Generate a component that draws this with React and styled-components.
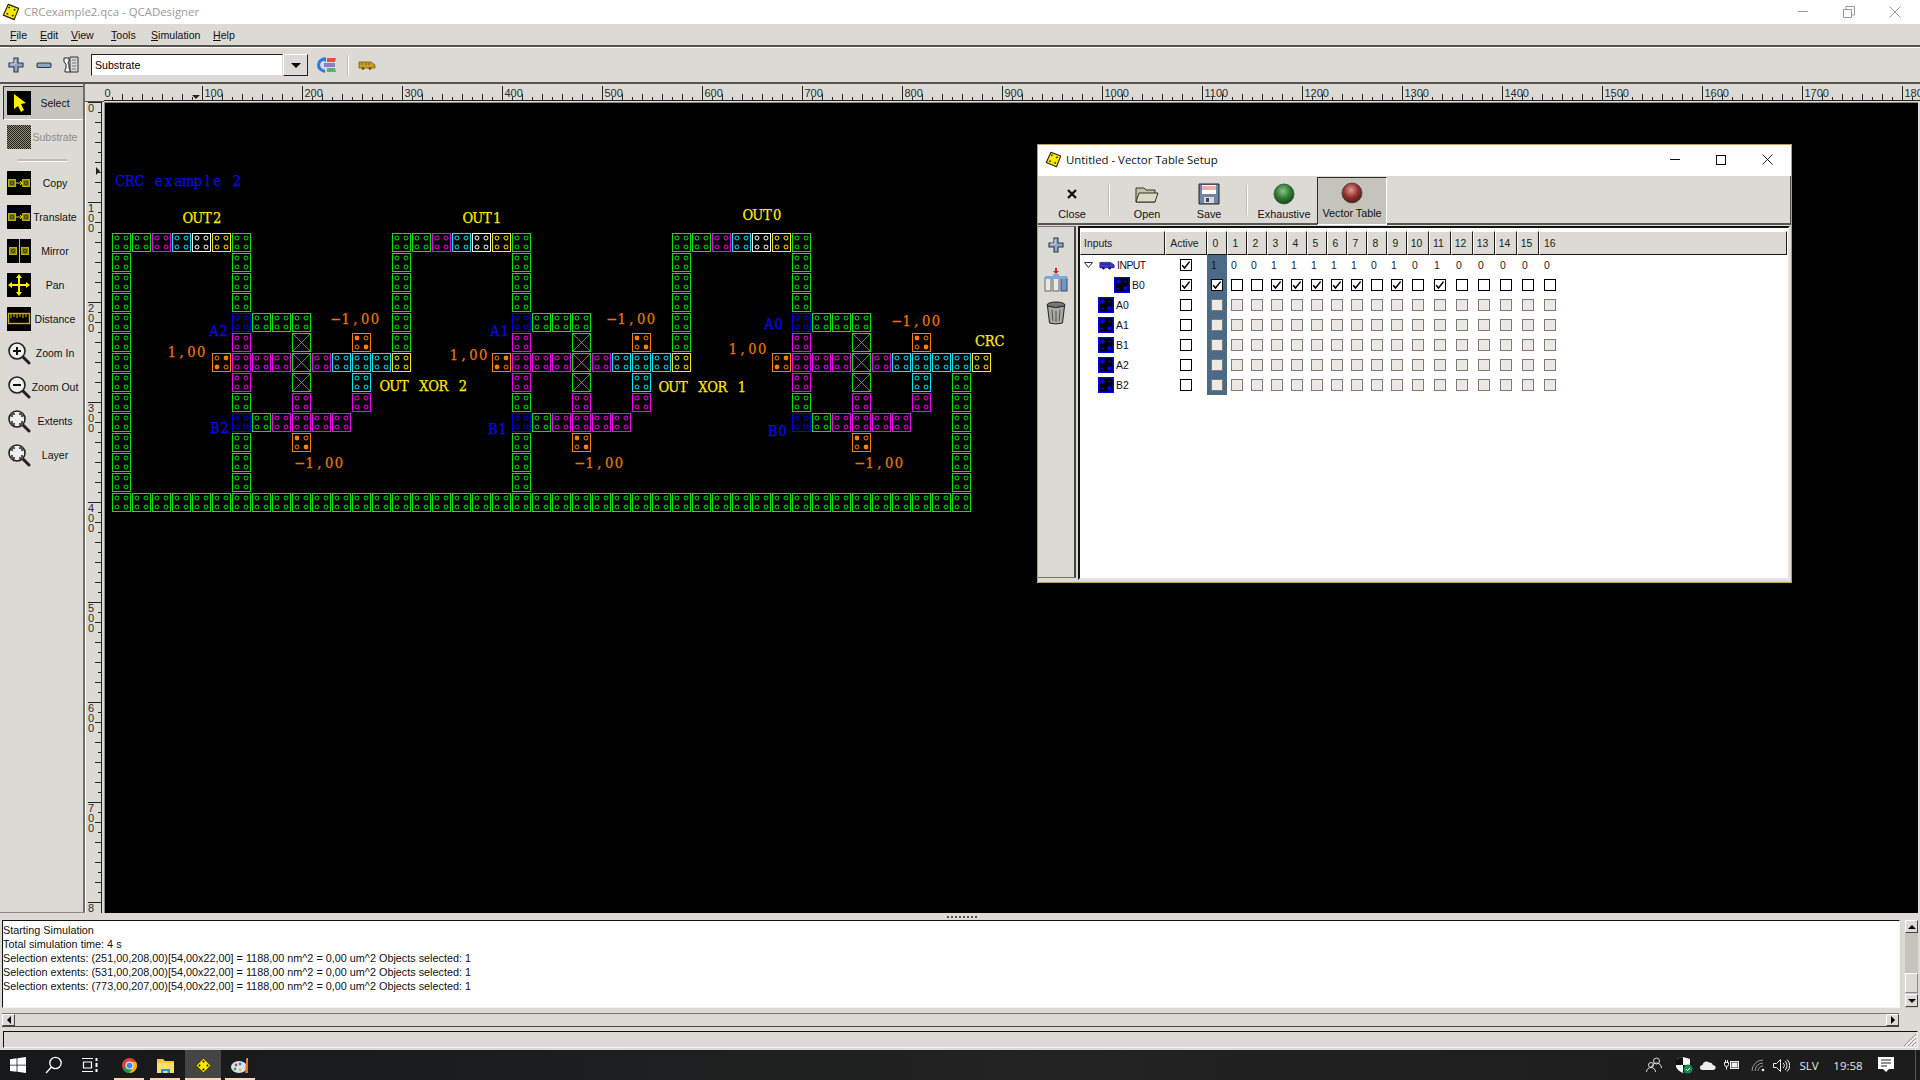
import React from 'react';
import styled, { createGlobalStyle } from 'styled-components';

const PANEL = '#dbdad5';
const SANS = '"Liberation Sans", Arial, sans-serif';
const UI = '"Open Sans", "Noto Sans", sans-serif';

const Global = createGlobalStyle`
  html, body { margin: 0; padding: 0; width: 1920px; height: 1080px; overflow: hidden; background: ${PANEL}; }
  #root { width: 1920px; height: 1080px; }
  * { box-sizing: border-box; }
`;

const Root = styled.div`
  position: relative; width: 1920px; height: 1080px; display: flex; flex-direction: column;
  background: ${PANEL}; font-family: ${SANS}; font-size: 10.5px; color: #000; overflow: hidden;
`;

/* ---------- main window chrome ---------- */
const TitleBar = styled.div`
  height: 24px; flex: none; background: #fff; display: flex; align-items: center; padding: 0 0 1px 2px;
`;
const TitleText = styled.span`
  margin-left: 4px; font: 11.4px ${UI}; color: #9a9a9a; flex: 1;
`;
const WinControls = styled.div`
  display: flex; align-items: center; padding-right: ${p => p.$pr ?? 2}px;
`;
const WinButton = styled.div`
  width: 46px; height: 24px; display: flex; align-items: center; justify-content: center;
`;
const MenuBar = styled.div`
  height: 23px; flex: none; display: flex; align-items: center; padding: 0 0 0 10px;
  border-bottom: 2px solid #55554f; gap: 0;
`;
const MenuItem = styled.span`
  width: ${p => p.$w}px; font-size: 10.6px; color: #111;
  u { text-decoration: underline; text-underline-offset: 1px; }
`;
const ToolBar = styled.div`
  height: 37px; flex: none; display: flex; align-items: center; border-top: 1px solid #fff;
  border-bottom: 2px solid #55554f;
`;
const ToolIcon = styled.div`
  width: ${p => p.$w}px; display: flex; justify-content: center; flex: none;
`;
const Combo = styled.div`
  display: flex; width: 217px; height: 22px; margin: 0 0 0 5px; flex: none;
`;
const ComboEntry = styled.div`
  flex: 1; background: #fff; border: 1px solid; border-color: #222 #dbdad5 #dbdad5 #222;
  font-size: 10.6px; padding: 3px 3px; line-height: 14px;
`;
const ComboArrow = styled.div`
  width: 25px; background: ${PANEL}; border: 1px solid; border-color: #fff #222 #222 #fff;
  display: flex; align-items: center; justify-content: center;
  &::after { content: ''; border-style: solid; border-width: 5px 5.5px 0; border-color: #000 transparent transparent; }
`;
const VSep = styled.div`
  width: 2px; height: 20px; flex: none; background: #bfbeb8; border-right: 1px solid #fff; margin: ${p => p.$m || '0 8px'};
`;

/* ---------- workspace ---------- */
const MainRow = styled.div`
  flex: none; height: 830px; display: flex;
`;
const SideBar = styled.div`
  width: 85px; flex: none; height: 829px; padding: 2px 0 0 3px; display: flex; flex-direction: column;
  border-right: 2px solid #6f6e68; border-bottom: 1px solid #8a8982;
`;
const SideBtn = styled.div`
  width: 80px; height: 34px; flex: none; display: flex; align-items: center; padding-left: 4px;
  ${p => p.$pressed && `background: #c6c5be; border: 1px solid; border-width: 1px 0 1px 1px; border-color: #333 #fff #fff #333; padding-left: 3px;`}
`;
const SideLabel = styled.span`
  flex: 1; text-align: center; font-size: 10.5px; white-space: nowrap;
  color: ${p => (p.$dim ? '#8e8d88' : '#111')}; margin-right: 4px;
`;
const SideSep = styled.div`
  height: 12px; flex: none; display: flex; align-items: center; padding-left: 15px;
  &::after { content: ''; width: 49px; height: 2px; background: #bdbcb6; border-bottom: 1px solid #fff; }
`;
const Work = styled.div`
  flex: 1; display: grid; grid-template-columns: 19px 1fr; grid-template-rows: 18px 1fr; height: 829px;
`;
const RulerCorner = styled.div`
  background: ${PANEL}; border-bottom: 1px solid #55554f;
`;
const RulerBox = styled.div`
  background: ${PANEL}; overflow: hidden; svg { display: block; }
`;
const Canvas = styled.div`
  background: #000; margin-right: 2px; border-left: 1px solid #888; border-top: 1px solid #888; overflow: hidden;
  svg { display: block; margin: -1px 0 0 -1px; }
`;
const Grip = styled.div`
  height: 6px; flex: none; display: flex; justify-content: center; align-items: center; gap: 2px; padding-left: 4px;
  i { width: 2px; height: 2px; background: #55554f; }
`;
const LogRow = styled.div`
  height: 88px; flex: none; display: flex; padding: 0 2px 0 2px;
`;
const LogBox = styled.div`
  width: 1898px; border: 1px solid; border-color: #111 #f4f4f2 #f4f4f2 #111; border-width: 1px; background: #fff;
  padding: 2px 0 0 0; font-size: 10.83px; line-height: 14px; color: #111; white-space: pre;
`;
const VScroll = styled.div`
  margin-left: 5px; width: 13px; display: flex; flex-direction: column; background: #c4c3bc;
`;
const ScrollBtn = styled.div`
  height: ${p => p.$h || 13}px; width: ${p => p.$w || 13}px; flex: none; background: ${PANEL};
  margin-top: ${p => p.$mt || 0}px;
  border: 1px solid; border-color: #fff #44443f #44443f #fff; display: flex; align-items: center; justify-content: center;
  &::after {
    content: ''; border-style: solid;
    ${p => p.$dir === 'up' && 'border-width: 0 4px 4px; border-color: transparent transparent #000;'}
    ${p => p.$dir === 'down' && 'border-width: 4px 4px 0; border-color: #000 transparent transparent;'}
    ${p => p.$dir === 'left' && 'border-width: 4px 4px 4px 0; border-color: transparent #000 transparent transparent;'}
    ${p => p.$dir === 'right' && 'border-width: 4px 0 4px 4px; border-color: transparent transparent transparent #000;'}
  }
`;
const ScrollThumb = styled.div`
  height: 20px; flex: none; background: ${PANEL}; border: 1px solid; border-color: #fff #8a8982 #8a8982 #fff;
  margin-top: ${p => p.$top}px;
`;
const HScroll = styled.div`
  height: 14px; flex: none; margin: 5px 21px 0 2px; display: flex; justify-content: space-between; align-items: stretch;
  background: ${PANEL}; border-top: 1px solid #777670; border-bottom: 1px solid #444;
`;
const StatusBar = styled.div`
  height: 17px; flex: none; margin: 4px 2px 0 3px; border: 1px solid; border-color: #111 #f4f4f2 #f4f4f2 #111; position: relative;
  svg { position: absolute; right: 0; bottom: 0; }
`;
const Taskbar = styled.div`
  height: 30px; flex: none; margin-top: 2px; background: linear-gradient(90deg, #16181a 0%, #222 55%, #1b1b1b 100%);
  display: flex; align-items: stretch; position: relative;
`;
const TaskSlot = styled.div`
  width: ${p => p.$w}px; margin-left: ${p => p.$ml || 0}px; flex: none; display: flex; align-items: center; justify-content: center;
  background: ${p => (p.$active ? '#454545' : 'transparent')};
  border-bottom: ${p => (p.$open ? '2px solid #f9d7b8' : '0')};
  padding-top: ${p => (p.$open ? 2 : 0)}px;
`;
const Tray = styled.div`
  margin-left: auto; display: flex; align-items: center; color: #e6e6e6; font: 11.5px ${UI};
`;
const TrayIcon = styled.div`
  width: ${p => p.$w}px; display: flex; justify-content: center; flex: none;
`;
const TrayText = styled.span`
  width: ${p => p.$w}px; text-align: center; flex: none;
`;
const TaskEnd = styled.div`
  width: 1px; height: 30px; background: #555; margin: 0 4px 0 14px;
`;

/* ---------- vector table window ---------- */
const Dialog = styled.div`
  position: absolute; left: 1037px; top: 144px; width: 755px; height: 439px; display: flex; flex-direction: column;
  background: ${PANEL}; border: 1px solid #c69a5e; border-bottom-width: 1px;
`;
const DlgTitle = styled.div`
  height: 31px; flex: none; background: #fff; display: flex; align-items: center; padding-left: 7px; padding-bottom: 2px;
`;
const DlgTitleText = styled.span`
  flex: 1; margin-left: 4px; font: 11.4px ${UI}; color: #111;
`;
const DlgTools = styled.div`
  height: 49px; flex: none; display: flex; align-items: stretch; border-bottom: 2px solid #55554f; border-right: 1px solid #55554f;
`;
const DlgTool = styled.div`
  width: ${p => p.$w}px; margin-left: ${p => p.$ml || 0}px; flex: none; display: flex; flex-direction: column; align-items: center;
  font-size: 10.8px; padding-top: 5px; height: 47px; margin-top: 2px; color: #111;
  ${p => p.$on && 'background:#c4c3bc; border:1px solid; border-color:#2a2a28 #fff #fff #2a2a28; padding-top: 4px; margin-top: 1px; height: 48px;'}
  svg { height: 22px; flex: none; }
  span { margin-top: 3px; line-height: 12px; white-space: nowrap; }
`;
const DlgSep = styled.div`
  width: 2px; height: 30px; background: #bdbcb6; border-right: 1px solid #fff; margin: 9px ${p => p.$r}px 0 ${p => p.$l}px; flex: none;
`;
const DlgBody = styled.div`
  flex: 1; display: flex; padding-top: 1px; min-height: 0;
`;
const DlgSide = styled.div`
  width: 38px; flex: none; display: flex; flex-direction: column; align-items: center; padding-top: 10px;
  border-right: 2px solid #44443f; border-bottom: 1px solid #777670; margin-bottom: 4px; border-top: 1px solid #777;
`;
const SideTool = styled.div`
  display: flex; justify-content: center; margin-top: ${p => p.$mt || 0}px;
  svg { display: block; }
`;
const TableFrame = styled.div`
  margin-left: 2px; flex: 1; display: flex; flex-direction: column; background: #fff; min-width: 0;
  border-left: 2px solid #111; border-top: 2px solid #111; padding: 3px 0 0 0; margin-right: 1px; margin-bottom: 2px;
  border-right: 2px solid #e4e3de; border-bottom: 2px solid #e4e3de; position: relative;
`;
const gridCols = '85px 42px repeat(10, 20px) repeat(7, 22px) 1fr';
const HeadRow = styled.div`
  display: grid; grid-template-columns: ${gridCols}; height: 24px; flex: none; margin-right: 1px;
`;
const HeadCell = styled.div`
  background: ${PANEL}; border: 1px solid; border-color: #fff #1c1c1c #1c1c1c #fff; font-size: 10.4px; color: #222;
  display: flex; align-items: center; justify-content: ${p => (p.$left ? 'flex-start' : 'center')};
  padding: 0 ${p => (p.$left ? 0 : 3)}px 0 ${p => (p.$left ? 3 : 0)}px;
  ${p => p.$stretch && 'justify-content:flex-start; padding-left:4px; grid-column: span 2;'}
`;
const Row = styled.div`
  display: grid; grid-template-columns: ${gridCols}; height: 20px; flex: none; font-size: 10.4px;
`;
const NameCell = styled.div`
  display: flex; align-items: center; padding-left: ${p => p.$indent}px; color: #111;
  span { margin-left: 2px; letter-spacing: ${p => (p.$tight ? '-0.5px' : '0')}; }
`;
const Expander = styled.svg`
  flex: none; margin-right: 6px;
`;
const ValCell = styled.div`
  display: flex; align-items: center; justify-content: center;
  background: ${p => (p.$hl ? '#4a6a87' : 'transparent')};
  padding-right: ${p => (p.$text ? 6 : 0)}px;
  color: ${p => (p.$hl ? '#0f1a2a' : '#222')};
`;
const Check = styled.div`
  width: 12px; height: 12px; flex: none; display: flex; align-items: center; justify-content: center;
  border: 1px solid ${p => (p.$off ? '#7d7c78' : '#000')}; background: ${p => (p.$off ? '#ece9e5' : '#fff')};
`;

/* ---------- icons ---------- */
const AppIcon = ({ s = 20 }) => (
  <svg width={s} height={s} viewBox="0 0 20 20">
    <path d="M7 1.5 L18.5 6 L13.5 18.5 L1.5 13.5 Z" fill="#f7ea00" stroke="#222" strokeWidth="1.3" strokeLinejoin="round" />
    <path d="M7 5h2M8 4v2M13 7.5h2M14 6.5v2M5 12h2M6 11v2M11 14h2M12 13v2" stroke="#222" strokeWidth="1" />
  </svg>
);
const PlusIcon = () => (
  <svg width="16" height="16" viewBox="0 0 16 16">
    <path d="M6 1h4v5h5v4h-5v5H6v-5H1V6h5z" fill="#8ea5c4" stroke="#2d3a4e" strokeWidth="1.1" />
    <path d="M7 2.5v4.5H2.5" stroke="#d8e2f0" fill="none" />
  </svg>
);
const MinusIcon = () => (
  <svg width="16" height="16" viewBox="0 0 16 16">
    <rect x="1" y="6" width="14" height="4.5" rx="1.2" fill="#8ea5c4" stroke="#2d3a4e" strokeWidth="1.1" />
  </svg>
);
const WrenchDoc = () => (
  <svg width="16" height="18" viewBox="0 0 16 18">
    <path d="M7 1h8v15H7z" fill="#d8d8d4" stroke="#333" />
    <path d="M1 2h5v3l-1 2 1 2v3l1 2v2H2v-2l1-2V8L1 6z" fill="#f6f6f6" stroke="#222" />
    <path d="M9 4h4M9 7h4M9 10h4M9 13h4" stroke="#777" />
  </svg>
);
const ColorIcon = () => (
  <svg width="20" height="16" viewBox="0 0 20 16">
    <path d="M8 1.500C3 3 1.500 6 1.500 8s1.500 5 6.500 6.500" fill="none" stroke="#2e7bdc" strokeWidth="3" />
    <path d="M9 0l-4 3 4 2z" fill="#2e7bdc" />
    <path d="M10 1h9l-1 4h-8z" fill="#e0503c" />
    <path d="M7 6h11v4H7z" fill="#8c7cd0" />
    <path d="M10 11h8l1 4h-9z" fill="#5cb06a" />
  </svg>
);
const BusIcon = ({ c = '#c8a218', d = '#6d5a10', w = 18 }) => (
  <svg width={w} height="9" viewBox="0 0 18 9">
    <path d="M1 1h12l4 3v3H1z" fill={c} stroke={d} strokeWidth="0.8" />
    <circle cx="5" cy="7.5" r="1.4" fill={d} /><circle cx="12" cy="7.5" r="1.4" fill={d} />
    <path d="M3 3h2M7 3h2M10 3h2" stroke={d} />
  </svg>
);
const Sq = ({ children, bg = '#000' }) => (
  <svg width="24" height="24" viewBox="0 0 24 24"><rect width="24" height="24" fill={bg} />{children}</svg>
);
const MiniCell = ({ x, y }) => (
  <g>
    <rect x={x} y={y} width="7" height="7" fill="#8a8500" stroke="#b9b000" />
    <path d={`M${x + 2} ${y + 2}h3v3h-3z`} fill="#000" />
    <path d={`M${x + 2.5} ${y + 3.5}h2`} stroke="#ffee00" />
  </g>
);
const SelectIcon = () => <Sq><path d="M7 3l0 15 4-3 3 6 3-2-3-6 5-1z" fill="#ffee00" /></Sq>;
const SubstrateIcon = () => (
  <svg width="24" height="24" viewBox="0 0 24 24">
    <defs><pattern id="hp" width="2" height="2" patternUnits="userSpaceOnUse"><rect width="2" height="2" fill="#8f8f7c" /><rect width="1" height="1" fill="#1e1e1a" /><rect x="1" y="1" width="1" height="1" fill="#1e1e1a" /></pattern></defs>
    <rect width="24" height="24" fill="url(#hp)" shapeRendering="crispEdges" />
  </svg>
);
const CopyIcon = () => <Sq><MiniCell x={1.5} y={8.5} /><MiniCell x={15.5} y={8.5} /><path d="M9 12h6M13 10l2.500 2-2.500 2" stroke="#e8e000" fill="none" /></Sq>;
const MirrorIcon = () => <Sq><MiniCell x={2.5} y={8.5} /><MiniCell x={14.5} y={8.5} /><path d="M12.5 0v24" stroke="#d8d000" /></Sq>;
const PanIcon = () => <Sq><path d="M12 1l3 4h-2v6h6V9l4 3-4 3v-2h-6v6h2l-3 4-3-4h2v-6H5v2l-4-3 4-3v2h6V5H9z" fill="#ffee00" /></Sq>;
const DistIcon = () => <Sq><rect x="1.5" y="6.5" width="21" height="10" fill="none" stroke="#c8b400" strokeWidth="1.4" /><path d="M4 7v4M7 7v3M10 7v4M13 7v3M16 7v4M19 7v3" stroke="#d8c800" /></Sq>;
const Magnifier = ({ kind }) => (
  <svg width="24" height="24" viewBox="0 0 24 24">
    <path d="M15 15l7 7" stroke="#222" strokeWidth="3" strokeLinecap="round" />
    <circle cx="10" cy="10" r="8" fill="#efefef" stroke="#222" strokeWidth="1.6" />
    {kind === 'in' && <path d="M6 10h8M10 6v8" stroke="#111" strokeWidth="2" />}
    {kind === 'out' && <path d="M6 10h8" stroke="#111" strokeWidth="2" />}
    {kind === 'ext' && <path d="M5 8V5h3M12 5h3v3M15 12v3h-3M8 15H5v-3" fill="none" stroke="#555" strokeWidth="2" />}
  </svg>
);
const CloseIcon = () => <svg width="16" height="22" viewBox="0 0 16 22"><path d="M4 7l8 8M12 7l-8 8" stroke="#111" strokeWidth="2.4" /></svg>;
const FolderIcon = () => (
  <svg width="24" height="22" viewBox="0 0 24 22">
    <path d="M1 5h8l2 2h9v12H1z" fill="#c2c4a4" stroke="#333" />
    <path d="M1 19l3-9h19l-3 9z" fill="#d9dcc0" stroke="#333" />
  </svg>
);
const SaveIcon = () => (
  <svg width="22" height="22" viewBox="0 0 22 22">
    <path d="M1 1h20v20H1z" fill="#6f86a8" stroke="#222" />
    <rect x="4" y="2" width="14" height="9" fill="#fff" /><path d="M4 4h14M4 6h14" stroke="#e06050" />
    <rect x="6" y="14" width="10" height="6" fill="#d8d8d8" /><rect x="8" y="15" width="3" height="4" fill="#445" />
  </svg>
);
const Ball = ({ id, c0, c1, c2 }) => (
  <svg width="22" height="22" viewBox="0 0 22 22">
    <defs><radialGradient id={id} cx="45%" cy="35%" r="65%"><stop offset="0" stopColor={c0} /><stop offset="0.55" stopColor={c1} /><stop offset="1" stopColor={c2} /></radialGradient></defs>
    <circle cx="11" cy="11" r="10" fill={`url(#${id})`} stroke="#3b4a3b" strokeWidth="0.8" />
  </svg>
);
const GroupIcon = () => (
  <svg width="24" height="24" viewBox="0 0 24 24">
    <path d="M12 0v4" stroke="#d02020" strokeWidth="2" /><path d="M9 3h6l-3 3z" fill="#d02020" />
    <rect x="1" y="10" width="6" height="13" fill="#e8e8e4" stroke="#666" /><rect x="9" y="10" width="6" height="13" fill="#e8e8e4" stroke="#666" /><rect x="17" y="10" width="6" height="13" fill="#6f96c8" stroke="#446" />
    <rect x="1" y="8" width="22" height="3" fill="#7fa8dc" /><rect x="9" y="6" width="6" height="3" fill="#7fa8dc" />
  </svg>
);
const TrashIcon = () => (
  <svg width="22" height="24" viewBox="0 0 20 24">
    <ellipse cx="10" cy="4" rx="9" ry="3" fill="#77776f" stroke="#222" />
    <path d="M1.5 5l2 17q6 2 13 0l2-17q-9 3-17 0z" fill="#a9a9a3" stroke="#222" />
    <path d="M6 9l.8 11M10 10v11M14 9l-.8 11" stroke="#555" />
  </svg>
);
const CellChip = () => (
  <svg width="16" height="16" viewBox="0 0 16 16">
    <rect x=".7" y=".7" width="14.6" height="14.6" fill="#000" stroke="#0000f0" strokeWidth="1.4" />
    <circle cx="4.500" cy="4.500" r="2.200" fill="#0000ff" /><circle cx="11.500" cy="11.500" r="2.200" fill="#0000ff" />
    <path d="M10.500 4.500h2M11.500 3.500v2M3.500 11.500h2M4.500 10.500v2" stroke="#0000ff" />
  </svg>
);
const Tick = () => <svg width="10" height="10" viewBox="0 0 10 10"><path d="M1.2 5.2l2.3 2.8L8.6 1.6" fill="none" stroke="#000" strokeWidth="1.5" /></svg>;

/* ---------- circuit ---------- */
const COLORS = { G: '#00e800', M: '#f000f0', C: '#00e8f0', W: '#ffffff', Y: '#ffea00', B: '#0000d8', O: '#ff8000' };
function buildCells() {
  const cells = [];
  const add = (i, j, t, f) => cells.push({ i, j, t, f });
  [0, 14, 28].forEach(o => {
    ['G', 'G', 'M', 'C', 'W', 'Y', 'G'].forEach((t, n) => add(o + n, 0, t));
    const h = o === 0 ? 12 : 5;
    for (let j = 1; j <= h; j++) add(o, j, 'G');
    [1, 2, 3].forEach(j => add(o + 6, j, 'G'));
    add(o + 6, 4, 'B'); add(o + 6, 5, 'M'); add(o + 6, 6, 'M'); add(o + 6, 7, 'M'); add(o + 6, 8, 'G'); add(o + 6, 9, 'B');
    if (o < 28) [10, 11, 12].forEach(j => add(o + 6, j, 'G'));
    [7, 8, 9].forEach(n => add(o + n, 4, 'G'));
    add(o + 9, 5, 'G', 'x'); add(o + 12, 5, 'O', 'neg');
    add(o + 5, 6, 'O', 'pos'); add(o + 7, 6, 'M'); add(o + 8, 6, 'M'); add(o + 9, 6, 'G', 'x'); add(o + 10, 6, 'M');
    [11, 12, 13].forEach(n => add(o + n, 6, 'C'));
    add(o + 9, 7, 'G', 'x'); add(o + 12, 7, 'C');
    add(o + 9, 8, 'M'); add(o + 12, 8, 'M');
    add(o + 7, 9, 'G'); [8, 9, 10, 11].forEach(n => add(o + n, 9, 'M'));
    add(o + 9, 10, 'O', 'neg');
  });
  add(14, 6, 'Y'); add(28, 6, 'Y');
  add(42, 6, 'C'); add(43, 6, 'Y');
  for (let j = 7; j <= 12; j++) add(42, j, 'G');
  for (let i = 0; i <= 42; i++) add(i, 13, 'G');
  return cells;
}
const CELLS = buildCells();

const Dot = ({ cx, cy, c, fill }) => (
  fill ? <circle cx={cx} cy={cy} r="2.4" fill={c} /> : <circle cx={cx} cy={cy} r="2" fill="none" stroke={c} />
);
const QCell = ({ i, j, t, f }) => {
  const x = 112 + 20 * i, y = 233 + 20 * j, c = COLORS[t];
  return (
    <g>
      <rect x={x + 0.5} y={y + 0.5} width="18" height="18" fill="none" stroke={c} />
      {f === 'x' ? (
        <path d={`M${x} ${y}L${x + 19} ${y + 19}M${x + 19} ${y}L${x} ${y + 19}`} stroke={c} strokeWidth="0.8" />
      ) : (
        <>
          <Dot cx={x + 5} cy={y + 5} c={c} fill={f === 'neg'} />
          <Dot cx={x + 14} cy={y + 5} c={c} fill={f === 'pos'} />
          <Dot cx={x + 5} cy={y + 14} c={c} fill={f === 'pos'} />
          <Dot cx={x + 14} cy={y + 14} c={c} fill={f === 'neg'} />
        </>
      )}
    </g>
  );
};
const LabelText = styled.text`
  font-family: "DejaVu Serif", "Liberation Serif", serif; font-size: 14.5px; font-stretch: condensed; white-space: pre;
  text-anchor: middle; stroke-width: 0.25px;
`;
const Lab = ({ x, y, c, s }) => {
  const xs = Array.from(s).map((_, n) => (x + (n + 0.5) * 9.75).toFixed(2)).join(' ');
  return <LabelText x={xs} y={y} fill={c} stroke={c}>{s}</LabelText>;
};
const LBL_Y = '#ffea00', LBL_B = '#0808f0', LBL_O = '#ec7800';
const LABELS = [
  [115, 186, LBL_B, 'CRC example 2'],
  [183, 223, LBL_Y, 'OUT2'], [463, 223, LBL_Y, 'OUT1'], [743, 220, LBL_Y, 'OUT0'],
  [209, 336, LBL_B, 'A2'], [210, 433, LBL_B, 'B2'], [490, 336, LBL_B, 'A1'], [488, 434, LBL_B, 'B1'], [764, 329, LBL_B, 'A0'], [768, 436, LBL_B, 'B0'],
  [167, 357, LBL_O, '1,00'], [449, 360, LBL_O, '1,00'], [728, 354, LBL_O, '1,00'],
  [331, 324, LBL_O, '−1,00'], [295, 468, LBL_O, '−1,00'], [607, 324, LBL_O, '−1,00'], [575, 468, LBL_O, '−1,00'], [892, 326, LBL_O, '−1,00'], [855, 468, LBL_O, '−1,00'],
  [380, 391, LBL_Y, 'OUT XOR 2'], [659, 392, LBL_Y, 'OUT XOR 1'], [975, 346, LBL_Y, 'CRC'],
];

const RulerText = styled.text`
  font-family: ${SANS}; font-size: 11px; fill: #2c2c30;
`;
const TopRuler = () => {
  const t = [];
  for (let x = 102; x < 1920; x += 10) {
    const k = (x - 102) / 10;
    if (k % 10 === 0) {
      t.push(<path key={x} d={`M${x + 0.5} 86V101`} stroke="#222" />);
      t.push(<RulerText key={'l' + x} x={x + 2.5} y={97}>{k * 10}</RulerText>);
    } else {
      t.push(<path key={x} d={`M${x + 0.5} ${k % 2 === 0 ? 94 : 97}V101`} stroke="#222" />);
    }
  }
  return (
    <svg width="1816" height="18" viewBox="104 84 1816 18">
      <path d="M104 100.5H1920" stroke="#222" />
      {t}
      <path d="M192 95h8l-4 4z" fill="#222" />
    </svg>
  );
};
const LeftRuler = () => {
  const t = [];
  for (let y = 102; y < 912; y += 10) {
    const k = (y - 102) / 10;
    if (k % 10 === 0) {
      t.push(<path key={y} d={`M88 ${y + 0.5}H101`} stroke="#222" />);
      String(k * 10).split('').forEach((d, n) => {
        if (y + 10 + n * 10 < 916) t.push(<RulerText key={y + 'd' + n} x={88} y={y + 10 + n * 10}>{d}</RulerText>);
      });
    } else {
      t.push(<path key={y} d={`M${k % 2 === 0 ? 95 : 98} ${y + 0.5}H101`} stroke="#222" />);
    }
  }
  return (
    <svg width="19" height="811" viewBox="85 102 19 811">
      <path d="M101.5 102V913" stroke="#222" />
      <path d="M85.5 102V913" stroke="#fff" />
      {t}
      <path d="M96 167v8l4-4z" fill="#222" />
    </svg>
  );
};

/* ---------- data ---------- */
const MENUS = [['F', 'ile', 30], ['E', 'dit', 31], ['V', 'iew', 40], ['T', 'ools', 40], ['S', 'imulation', 62], ['H', 'elp', 30]];
const TOOLS = [
  ['Select', <SelectIcon />, true], ['Substrate', <SubstrateIcon />, false, true], 'sep',
  ['Copy', <CopyIcon />], ['Translate', <CopyIcon />], ['Mirror', <MirrorIcon />], ['Pan', <PanIcon />], ['Distance', <DistIcon />],
  ['Zoom In', <Magnifier kind="in" />], ['Zoom Out', <Magnifier kind="out" />], ['Extents', <Magnifier kind="ext" />], ['Layer', <Magnifier kind="ext" />],
];
const LOG = `Starting Simulation
Total simulation time: 4 s
Selection extents: (251,00,208,00)[54,00x22,00] = 1188,00 nm^2 = 0,00 um^2 Objects selected: 1
Selection extents: (531,00,208,00)[54,00x22,00] = 1188,00 nm^2 = 0,00 um^2 Objects selected: 1
Selection extents: (773,00,207,00)[54,00x22,00] = 1188,00 nm^2 = 0,00 um^2 Objects selected: 1`;
const BITS = [1, 0, 0, 1, 1, 1, 1, 1, 0, 1, 0, 1, 0, 0, 0, 0, 0];
const COLS = BITS.map((_, n) => n);

const CheckRow = ({ name, indent, active, off }) => (
  <Row>
    <NameCell $indent={indent}><CellChip /><span>{name}</span></NameCell>
    <ValCell><Check>{active && <Tick />}</Check></ValCell>
    {COLS.map(n => (
      <ValCell key={n} $hl={n === 0}>
        <Check $off={off}>{!off && BITS[n] === 1 && <Tick />}</Check>
      </ValCell>
    ))}
  </Row>
);

const WinX = ({ c, s = 12 }) => <svg width={s} height={s} viewBox="0 0 12 12"><path d="M.5.5l11 11M11.5.5l-11 11" stroke={c} /></svg>;

export default function App() {
  return (
    <Root>
      <Global />
      <TitleBar>
        <AppIcon s={18} />
        <TitleText>CRCexample2.qca - QCADesigner</TitleText>
        <WinControls>
          <WinButton><svg width="10" height="2"><path d="M0 .5H10" stroke="#999" /></svg></WinButton>
          <WinButton><svg width="12" height="12" viewBox="0 0 12 12"><path d="M.5 3.5h8v8h-8zM3 3.5V.5h8.5V9H8.5" fill="none" stroke="#999" /></svg></WinButton>
          <WinButton><WinX c="#999" /></WinButton>
        </WinControls>
      </TitleBar>
      <MenuBar>
        {MENUS.map(([a, b, w]) => <MenuItem key={a} $w={w}><u>{a}</u>{b}</MenuItem>)}
      </MenuBar>
      <ToolBar>
        <ToolIcon $w={32}><PlusIcon /></ToolIcon>
        <ToolIcon $w={24}><MinusIcon /></ToolIcon>
        <ToolIcon $w={30}><WrenchDoc /></ToolIcon>
        <Combo><ComboEntry>Substrate</ComboEntry><ComboArrow /></Combo>
        <ToolIcon $w={38}><ColorIcon /></ToolIcon>
        <VSep $m="0 0 0 1px" />
        <ToolIcon $w={36}><BusIcon /></ToolIcon>
      </ToolBar>
      <MainRow>
        <SideBar>
          {TOOLS.map((t, n) => t === 'sep' ? <SideSep key={n} /> : (
            <SideBtn key={t[0]} $pressed={t[2]}>{t[1]}<SideLabel $dim={t[3]}>{t[0]}</SideLabel></SideBtn>
          ))}
        </SideBar>
        <Work>
          <RulerCorner />
          <RulerBox><TopRuler /></RulerBox>
          <RulerBox><LeftRuler /></RulerBox>
          <Canvas>
            <svg width="1816" height="810" viewBox="104 102 1816 810">
              {CELLS.map((c, n) => <QCell key={n} {...c} />)}
              {LABELS.map(([x, y, c, s]) => <Lab key={x + s} x={x} y={y} c={c} s={s} />)}
            </svg>
          </Canvas>
        </Work>
      </MainRow>
      <Grip>{[0, 1, 2, 3, 4, 5, 6, 7].map(n => <i key={n} />)}</Grip>
      <LogRow>
        <LogBox>{LOG}</LogBox>
        <VScroll>
          <ScrollBtn $dir="up" />
          <ScrollThumb $top={40} />
          <ScrollBtn $dir="down" $mt={1} />
        </VScroll>
      </LogRow>
      <HScroll>
        <ScrollBtn $dir="left" $h={12} />
        <ScrollBtn $dir="right" $h={12} />
      </HScroll>
      <StatusBar>
        <svg width="15" height="15" viewBox="0 0 15 15"><path d="M14 2L2 14M14 6L6 14M14 10L10 14" stroke="#999" /><path d="M14 4L4 14M14 8L8 14M14 12L12 14" stroke="#fff" /></svg>
      </StatusBar>
      <Taskbar>
        <TaskSlot $w={36}>
          <svg width="16" height="16" viewBox="0 0 16 16" fill="#fff"><path d="M0 2.2l6.6-.9v6.4H0zM7.4 1.2L16 0v7.7H7.4zM0 8.4h6.6v6.4L0 13.9zM7.4 8.4H16V16l-8.6-1.2z" /></svg>
        </TaskSlot>
        <TaskSlot $w={36}>
          <svg width="18" height="18" viewBox="0 0 18 18" fill="none" stroke="#fff" strokeWidth="1.3"><circle cx="10.5" cy="7" r="5.7" /><path d="M6.5 11L1 17" /></svg>
        </TaskSlot>
        <TaskSlot $w={36}>
          <svg width="17" height="16" viewBox="0 0 17 16" fill="none" stroke="#fff" strokeWidth="1.2"><path d="M0 1.5h11M0 14.5h11M1.5 5h8v6h-8z" /><path d="M14.5 1v3M14.5 6v4M14.5 12v3" strokeWidth="2" /></svg>
        </TaskSlot>
        <TaskSlot $w={30} $ml={6} $open>
          <svg width="15" height="15" viewBox="0 0 15 15">
            <circle cx="7.5" cy="7.5" r="7.5" fill="#db4437" />
            <path d="M7.5 7.5L1 11.2A7.5 7.5 0 0 0 7.5 15L11 8z" fill="#0f9d58" />
            <path d="M7.5 4h6.6a7.5 7.5 0 0 1-6.6 11l3.4-6z" fill="#f4b400" />
            <circle cx="7.5" cy="7.5" r="3.6" fill="#4285f4" stroke="#fff" strokeWidth="1" />
          </svg>
        </TaskSlot>
        <TaskSlot $w={30} $ml={6} $open>
          <svg width="17" height="15" viewBox="0 0 17 15">
            <path d="M0 1h6l2 2h9v12H0z" fill="#f5c842" /><path d="M0 5h17v10H0z" fill="#fbdc78" />
            <path d="M4 15v-4h9v4h-2.5v-2h-4v2z" fill="#2f8fd8" />
          </svg>
        </TaskSlot>
        <TaskSlot $w={36} $ml={5} $active $open>
          <svg width="17" height="17" viewBox="0 0 17 17"><path d="M8.5 1L16 8.5 8.5 16 1 8.5z" fill="#f7e600" stroke="#222" /><circle cx="8.5" cy="4.5" r="1" /><circle cx="12.5" cy="8.5" r="1" /><circle cx="4.5" cy="8.5" r="1" /><circle cx="8.5" cy="12.5" r="1" /></svg>
        </TaskSlot>
        <TaskSlot $w={30} $ml={4} $open>
          <svg width="19" height="17" viewBox="0 0 19 17">
            <ellipse cx="8" cy="10" rx="8" ry="6" fill="#d8e4ee" />
            <circle cx="5" cy="8" r="1.4" fill="#d04040" /><circle cx="9" cy="7" r="1.4" fill="#3a80d0" /><circle cx="4" cy="12" r="1.4" fill="#40a050" /><circle cx="9" cy="13" r="1.4" fill="#e0c030" />
            <path d="M14 16l1-12 2 0 0 12z" fill="#e87020" /><path d="M15 4l.5-3 1.5 0 0 3z" fill="#c8a070" />
          </svg>
        </TaskSlot>
        <Tray>
          <TrayIcon $w={30}>
            <svg width="16" height="16" viewBox="0 0 16 16" fill="none" stroke="#ddd"><circle cx="10.5" cy="4" r="3" /><path d="M5.5 11a5 5 0 0 1 10 0" /><circle cx="5" cy="8" r="2.5" /><path d="M.5 15a4.500 4.500 0 0 1 9 0" /></svg>
          </TrayIcon>
          <TrayIcon $w={30}>
            <svg width="17" height="17" viewBox="0 0 17 17"><path d="M7 0l7 2v6c0 4-3 6-7 8-4-2-7-4-7-8V2z" fill="#fff" /><path d="M7 0v8H0V2zM7 8h7c0 4-3 6-7 8z" fill="#111" /><circle cx="12" cy="12" r="4.5" fill="#14894a" /><path d="M10 12l1.500 1.500L14 11" stroke="#fff" fill="none" /></svg>
          </TrayIcon>
          <TrayIcon $w={18}>
            <svg width="16" height="10" viewBox="0 0 16 10"><path d="M2.500 10a2.500 2.500 0 0 1 0-5A4 4 0 0 1 9 2.500 3.500 3.500 0 0 1 13 5.200 2.400 2.400 0 0 1 13.500 10z" fill="#eee" /></svg>
          </TrayIcon>
          <TrayIcon $w={30}>
            <svg width="16" height="10" viewBox="0 0 16 10" fill="none" stroke="#eee"><path d="M1.500 0v2M3.500 0v2M.5 2.500h4v2a2 2 0 0 1-4 0zM2.500 6.500v3" /><rect x="6.500" y="1.500" width="8" height="7" /><rect x="8" y="3" width="5" height="4" fill="#eee" /></svg>
          </TrayIcon>
          <TrayIcon $w={22}>
            <svg width="15" height="13" viewBox="0 0 15 13" fill="none" stroke="#999"><path d="M1 12A11 11 0 0 1 12 1M4 12a8 8 0 0 1 8-8M7 12a5 5 0 0 1 5-5" /><circle cx="12" cy="11" r="1.300" fill="#eee" stroke="none" /></svg>
          </TrayIcon>
          <TrayIcon $w={24}>
            <svg width="17" height="13" viewBox="0 0 17 13" fill="none" stroke="#eee"><path d="M.5 4.500h3l4-4v12l-4-4h-3zM10 4a3 3 0 0 1 0 5M12 2a6 6 0 0 1 0 9M14 .5a8 8 0 0 1 0 12" /></svg>
          </TrayIcon>
          <TrayText $w={32}>SLV</TrayText>
          <TrayText $w={46}>19:58</TrayText>
          <TrayIcon $w={30}>
            <svg width="16" height="16" viewBox="0 0 16 16"><path d="M0 0h16v12h-5l-3 3-3-3H0z" fill="#fff" /><path d="M3 3h10M3 6h10M3 9h6" stroke="#222" /></svg>
          </TrayIcon>
          <TaskEnd />
        </Tray>
      </Taskbar>

      <Dialog>
        <DlgTitle>
          <AppIcon s={17} />
          <DlgTitleText>Untitled - Vector Table Setup</DlgTitleText>
          <WinControls $pr={1}>
            <WinButton><svg width="10" height="2"><path d="M0 .5H10" stroke="#111" /></svg></WinButton>
            <WinButton><svg width="10" height="10"><rect x=".5" y=".5" width="9" height="9" fill="none" stroke="#111" /></svg></WinButton>
            <WinButton><WinX c="#111" s={11} /></WinButton>
          </WinControls>
        </DlgTitle>
        <DlgTools>
          <DlgTool $w={52} $ml={8}><CloseIcon /><span>Close</span></DlgTool>
          <DlgSep $l={10} $r={10} />
          <DlgTool $w={54}><FolderIcon /><span>Open</span></DlgTool>
          <DlgTool $w={60} $ml={5}><SaveIcon /><span>Save</span></DlgTool>
          <DlgSep $l={7} $r={6} />
          <DlgTool $w={60}><Ball id="bg" c0="#8fc08f" c1="#2f7f2f" c2="#1e451e" /><span>Exhaustive</span></DlgTool>
          <DlgTool $w={70} $on $ml={3}><Ball id="br" c0="#e0a098" c1="#983030" c2="#501a18" /><span>Vector Table</span></DlgTool>
        </DlgTools>
        <DlgBody>
          <DlgSide>
            <SideTool><PlusIcon /></SideTool>
            <SideTool $mt={15}><GroupIcon /></SideTool>
            <SideTool $mt={9}><TrashIcon /></SideTool>
          </DlgSide>
          <TableFrame>
            <HeadRow>
              <HeadCell $left>Inputs</HeadCell>
              <HeadCell>Active</HeadCell>
              {COLS.map(n => <HeadCell key={n} $stretch={n === 16}>{n}</HeadCell>)}
            </HeadRow>
            <Row>
              <NameCell $indent={4} $tight>
                <Expander width="9" height="6" viewBox="0 0 9 6"><path d="M.5.5h8L4.500 5.500z" fill="#fff" stroke="#333" /></Expander>
                <BusIcon c="#3a3ad0" d="#101060" w={16} /><span>INPUT</span>
              </NameCell>
              <ValCell><Check><Tick /></Check></ValCell>
              {BITS.map((b, n) => <ValCell key={n} $text $hl={n === 0}>{b}</ValCell>)}
            </Row>
            <CheckRow name="B0" indent={34} active />
            {['A0', 'A1', 'B1', 'A2', 'B2'].map(n => <CheckRow key={n} name={n} indent={18} off />)}
          </TableFrame>
        </DlgBody>
      </Dialog>
    </Root>
  );
}
